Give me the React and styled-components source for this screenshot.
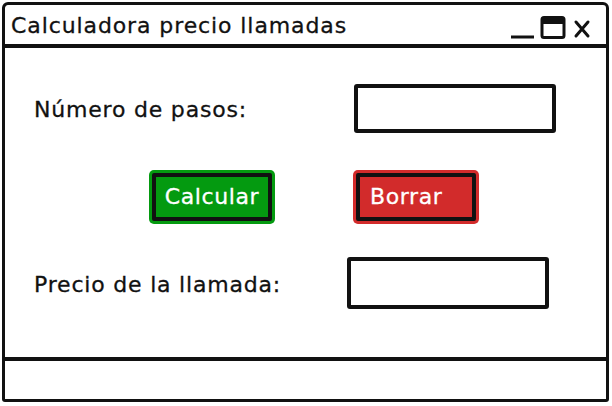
import React from "react";
import styled, { createGlobalStyle } from "styled-components";

const Global = createGlobalStyle`
  html, body {
    margin: 0;
    padding: 0;
    background: #fff;
  }
  body {
    font-family: "DejaVu Sans", "Liberation Sans", sans-serif;
    color: #111;
  }
`;

const App = () => {
  return (
    <Page>
      <Global />
      <Window>
        <TitleBar>
          <Title>Calculadora precio llamadas</Title>
          <Controls>
            <svg width="86" height="28" viewBox="0 0 86 28">
              <path d="M3 24 L26 24" stroke="#111" strokeWidth="3" fill="none" />
              <rect x="34" y="4.5" width="22" height="20" rx="2" stroke="#111" strokeWidth="3" fill="#fff" />
              <rect x="34" y="4" width="22" height="7" fill="#111" />
              <path d="M68 9 L80 23 M80 9 L68 23" stroke="#111" strokeWidth="3" fill="none" strokeLinecap="round" />
            </svg>
          </Controls>
        </TitleBar>
        <Body>
          <Row>
            <Label $w={320}>Número de pasos:</Label>
            <Field $h={49} />
          </Row>
          <ButtonRow>
            <Button $bg="#049a10" $center>Calcular</Button>
            <Button $bg="#d22b2b">Borrar</Button>
          </ButtonRow>
          <Row>
            <Label $w={313}>Precio de la llamada:</Label>
            <Field $h={52} />
          </Row>
        </Body>
        <StatusBar />
      </Window>
    </Page>
  );
};
export default App;

const Page = styled.div`
  width: 612px;
  height: 406px;
  padding: 2px 3px 4px 2px;
  box-sizing: border-box;
`;

const Window = styled.div`
  height: 100%;
  box-sizing: border-box;
  border: 3.5px solid #111;
  border-radius: 6px 6px 3px 3px;
  display: flex;
  flex-direction: column;
`;

const TitleBar = styled.div`
  height: 39px;
  border-bottom: 4px solid #111;
  display: flex;
  align-items: center;
  justify-content: space-between;
  padding: 0 12px 0 6px;
`;

const Title = styled.div`
  font-size: 22px;
  letter-spacing: 0.9px;
  padding-top: 2px;
  -webkit-text-stroke: 0.3px #111;
`;

const Controls = styled.div`
  display: flex;
  align-items: center;
  padding-top: 4px;
`;

const Body = styled.div`
  flex: 1;
  display: flex;
  flex-direction: column;
  padding: 36px 0 0 29px;
`;

const Row = styled.div`
  display: flex;
  align-items: center;
`;

const Label = styled.div`
  flex: 0 0 ${(p) => p.$w}px;
  font-size: 22px;
  letter-spacing: 0.8px;
  padding-top: 2px;
  -webkit-text-stroke: 0.3px #111;
`;

const Field = styled.div`
  width: 202px;
  height: ${(p) => p.$h}px;
  box-sizing: border-box;
  border: 4px solid #111;
  border-radius: 3px;
  background: #fff;
`;

const ButtonRow = styled.div`
  display: flex;
  gap: 84px;
  margin: 40px 0 36px 118px;
`;

const Button = styled.div`
  width: 120px;
  height: 48px;
  box-sizing: border-box;
  border: 4px solid #111;
  border-radius: 2px;
  background: ${(p) => p.$bg};
  box-shadow: 0 0 0 3px ${(p) => p.$bg};
  color: #fff;
  font-size: 22px;
  letter-spacing: 0.6px;
  -webkit-text-stroke: 0.3px #fff;
  display: flex;
  align-items: center;
  justify-content: ${(p) => (p.$center ? "center" : "flex-start")};
  padding: 0 0 2px ${(p) => (p.$center ? 0 : 10)}px;
`;

const StatusBar = styled.div`
  margin-top: auto;
  height: 38px;
  border-top: 4px solid #111;
`;
